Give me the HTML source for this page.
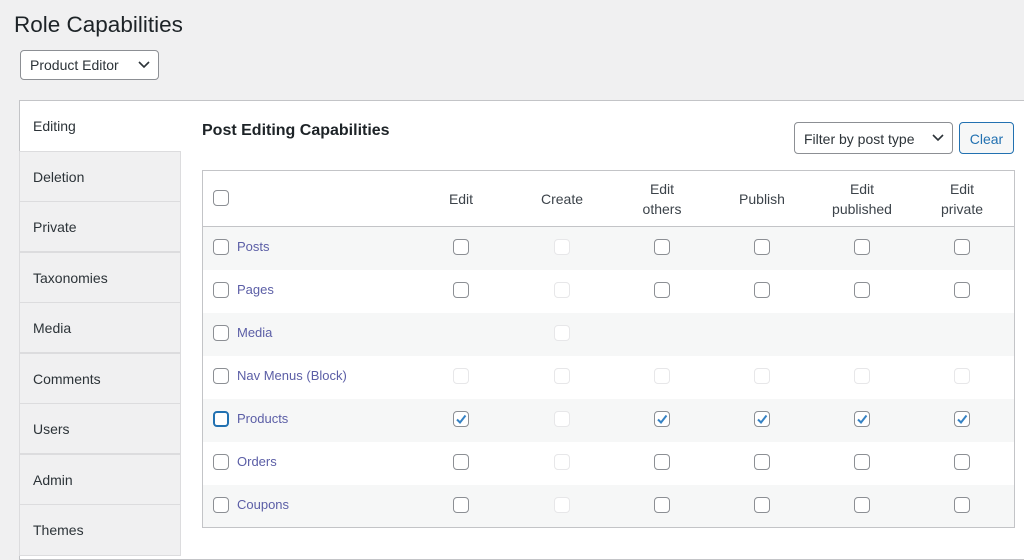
<!DOCTYPE html><html><head><style>
*{box-sizing:border-box;margin:0;padding:0}
body{width:1024px;height:555px;background:#f0f0f1;font-family:"Liberation Sans",sans-serif;color:#1d2327;position:relative;overflow:hidden}
.a{position:absolute}
h1{position:absolute;left:14px;top:12px;font-size:22.5px;font-weight:400}
.sel{position:absolute;border:1px solid #8c8f94;border-radius:4px;background:#fff;font-size:14px;color:#2c3338}
.sel svg{position:absolute;right:8px;top:50%;margin-top:-4px}
.panel{left:19px;top:100px;width:1010px;height:460px;background:#fff;border:1px solid #c3c4c7}
.tab{position:absolute;left:19px;width:162px;height:51px;background:#f0f0f1;border:1px solid #dcdcde;font-size:14px;padding:17px 0 0 13px;color:#2c3338}
.tbl{left:202px;top:170px;width:813px;height:358px;border:1px solid #c3c4c7;z-index:2;pointer-events:none}
.row{position:absolute;left:203px;width:811px;height:43px}
.alt{background:#f6f7f7}
.cb{position:absolute;width:16px;height:16px;border:1px solid #8c8f94;border-radius:4px;background:#fff}
.dis{border-color:#e7e7e9}
.lbl{position:absolute;font-size:13px;color:#5b5ea6}
.hd{position:absolute;font-size:14px;color:#3c434a;text-align:center;width:100px;line-height:20px}
</style></head><body>
<h1>Role Capabilities</h1>
<div class="sel" style="left:20px;top:50px;width:139px;height:30px;padding:6px 0 0 9px">Product Editor<svg width="12" height="8"><path d="M1 1l5 5 5-5" stroke="#2c3338" stroke-width="1.6" fill="none"/></svg></div>
<div class="a panel"></div>
<div class="a" style="left:33px;top:118px;font-size:14px;color:#2c3338">Editing</div>
<div class="tab" style="top:151px">Deletion</div>
<div class="tab" style="top:201px">Private</div>
<div class="tab" style="top:252px">Taxonomies</div>
<div class="tab" style="top:302px">Media</div>
<div class="tab" style="top:353px">Comments</div>
<div class="tab" style="top:403px">Users</div>
<div class="tab" style="top:454px">Admin</div>
<div class="tab" style="top:504px;height:52px">Themes</div>
<div class="a" style="left:202px;top:122px;font-size:16px;font-weight:700">Post Editing Capabilities</div>
<div class="sel" style="left:794px;top:122px;width:159px;height:32px;padding:8px 0 0 9px">Filter by post type<svg width="12" height="8"><path d="M1 1l5 5 5-5" stroke="#2c3338" stroke-width="1.6" fill="none"/></svg></div>
<div class="a" style="left:959px;top:122px;width:55px;height:32px;border:1px solid #2271b1;border-radius:4px;background:#f6f7f7;color:#2271b1;font-size:14px;text-align:center;padding-top:8px">Clear</div>
<div class="a tbl"></div>
<div class="a" style="left:203px;top:226px;width:811px;height:1px;background:#c3c4c7"></div>
<div class="cb" style="left:213px;top:190px"></div>
<div class="hd" style="left:411px;top:189px">Edit</div>
<div class="hd" style="left:512px;top:189px">Create</div>
<div class="hd" style="left:612px;top:179px">Edit<br>others</div>
<div class="hd" style="left:712px;top:189px">Publish</div>
<div class="hd" style="left:812px;top:179px">Edit<br>published</div>
<div class="hd" style="left:912px;top:179px">Edit<br>private</div>
<div id="rows"></div>
<script>
var rows=[["Posts","nDnnnn"],["Pages","nDnnnn"],["Media","-D----"],["Nav Menus (Block)","DDDDDD"],["Products","cDcccc"],["Orders","nDnnnn"],["Coupons","nDnnnn"]];
var xs=[461,562,662,762,862,962],h="";
rows.forEach(function(r,i){var t=227+i*43;
h+='<div class="row'+(i%2==0?' alt':'')+'" style="top:'+t+'px;height:'+(i==6?42:43)+'px"></div>';
var c=t+12;
h+='<div class="cb" style="left:213px;top:'+c+'px'+(i==4?';border:2px solid #2271b1':'')+'"></div><div class="lbl" style="left:237px;top:'+(c)+'px">'+r[0]+'</div>';
for(var j=0;j<6;j++){var k=r[1][j];if(k=='-')continue;
h+='<div class="cb'+(k=='D'?' dis':'')+'" style="left:'+(xs[j]-8)+'px;top:'+c+'px">'+(k=='c'?'<svg width="14" height="14" style="position:absolute;left:0;top:0"><path d="M3 7.5l3 3 5.5-7" stroke="#3582c4" stroke-width="2" fill="none"/></svg>':'')+'</div>';}
});
document.getElementById("rows").innerHTML=h;
</script>
</body></html>
